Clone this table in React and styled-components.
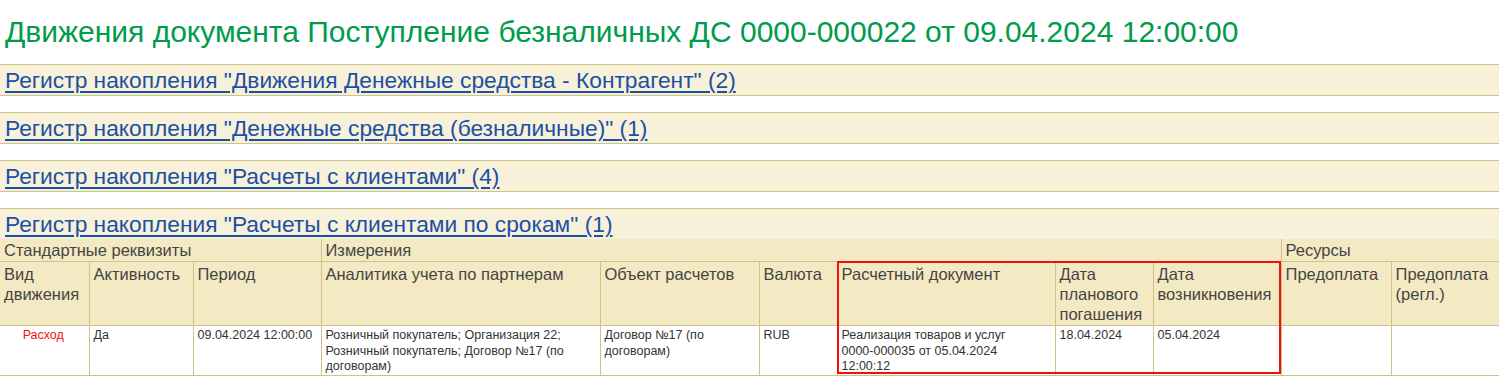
import React from 'react';
import styled, { createGlobalStyle } from 'styled-components';

const GlobalStyle = createGlobalStyle`
  html, body {
    margin: 0;
    padding: 0;
    background: #ffffff;
    font-family: "Liberation Sans", Arial, sans-serif;
  }
`;

const Page = styled.div`
  width: 1499px;
  height: 376px;
  overflow: hidden;
`;

const Title = styled.h1`
  margin: 0;
  padding: 15px 0 0 5px;
  height: 64px;
  box-sizing: border-box;
  font-size: 30px;
  font-weight: normal;
  line-height: 34px;
  color: #009b4b;
  white-space: nowrap;
`;

const Section = styled.div`
  margin-bottom: ${({ last }) => (last ? '0' : '16px')};
`;

const Band = styled.div`
  height: 32px;
  box-sizing: border-box;
  background: #f7f1da;
  border-top: 1px solid #d0c286;
  border-bottom: 1px solid #d0c286;
  padding: 1px 0 0 5px;
  display: flex;
  align-items: center;
`;

const RegisterLink = styled.a`
  font-size: 22.75px;
  color: #1c4fa6;
  text-decoration: underline;
  text-decoration-thickness: 2px;
  text-underline-offset: 3px;
  white-space: nowrap;
  cursor: pointer;
`;

const TableWrap = styled.div`
  position: relative;
`;

const Grid = styled.table`
  border-collapse: collapse;
  table-layout: fixed;
  width: 1500px;
  margin-top: -1px;
`;

const GroupCell = styled.th`
  background: #f3e9c3;
  border: 1px solid #d0c286;
  border-top: none;
  height: 22px;
  padding: 0 4px;
  font-size: 16.5px;
  font-weight: normal;
  color: #454545;
  text-align: left;
  white-space: nowrap;
  &:first-child { border-left: none; }
`;

const HeadCell = styled.th`
  background: #f3e9c3;
  border: 1px solid #d0c286;
  height: 61px;
  padding: 2px 4px 0 4px;
  font-size: 16.5px;
  line-height: 20px;
  font-weight: normal;
  color: #454545;
  text-align: left;
  vertical-align: top;
  &:first-child { border-left: none; }
`;

const Cell = styled.td`
  border: 1px solid #d0c286;
  height: 46px;
  padding: 2px ${({ $padRight }) => $padRight || 6}px 0 4px;
  font-size: 12.5px;
  line-height: 15.5px;
  color: ${({ $red }) => ($red ? '#ee1111' : '#333333')};
  text-align: ${({ $center }) => ($center ? 'center' : 'left')};
  vertical-align: top;
  &:first-child { border-left: none; }
`;

const Highlight = styled.div`
  position: absolute;
  left: 837px;
  top: 22px;
  width: 444px;
  height: 113px;
  box-sizing: border-box;
  border: 2px solid #ee1111;
  pointer-events: none;
`;

const registers = [
  'Регистр накопления "Движения Денежные средства - Контрагент" (2)',
  'Регистр накопления "Денежные средства (безналичные)" (1)',
  'Регистр накопления "Расчеты с клиентами" (4)',
  'Регистр накопления "Расчеты с клиентами по срокам" (1)',
];

const columns = [
  { title: 'Вид движения', width: 89 },
  { title: 'Активность', width: 104 },
  { title: 'Период', width: 128 },
  { title: 'Аналитика учета по партнерам', width: 279 },
  { title: 'Объект расчетов', width: 159 },
  { title: 'Валюта', width: 78 },
  { title: 'Расчетный документ', width: 218 },
  { title: 'Дата планового погашения', width: 98 },
  { title: 'Дата возникновения', width: 128 },
  { title: 'Предоплата', width: 110 },
  { title: 'Предоплата (регл.)', width: 109 },
];

// value + optional right padding (keeps the document number on one line)
const row = [
  { v: 'Да' },
  { v: '09.04.2024 12:00:00' },
  { v: 'Розничный покупатель; Организация 22; Розничный покупатель; Договор №17 (по договорам)' },
  { v: 'Договор №17 (по договорам)' },
  { v: 'RUB' },
  { v: 'Реализация товаров и услуг 0000-000035 от 05.04.2024 12:00:12', pad: 20 },
  { v: '18.04.2024' },
  { v: '05.04.2024' },
  { v: '' },
  { v: '' },
];

const App = () => {
  return (
    <Page>
      <GlobalStyle />
      <Title>Движения документа Поступление безналичных ДС 0000-000022 от 09.04.2024 12:00:00</Title>
      {registers.map((name, i) => (
        <Section key={i} last={i === registers.length - 1}>
          <Band>
            <RegisterLink>{name}</RegisterLink>
          </Band>
        </Section>
      ))}
      <TableWrap>
        <Grid>
          <colgroup>
            {columns.map((c, i) => (
              <col key={i} style={{ width: c.width }} />
            ))}
          </colgroup>
          <thead>
            <tr>
              <GroupCell colSpan={3}>Стандартные реквизиты</GroupCell>
              <GroupCell colSpan={6}>Измерения</GroupCell>
              <GroupCell colSpan={2}>Ресурсы</GroupCell>
            </tr>
            <tr>
              {columns.map((c, i) => (
                <HeadCell key={i}>{c.title}</HeadCell>
              ))}
            </tr>
          </thead>
          <tbody>
            <tr>
              <Cell $red $center>Расход</Cell>
              {row.map((c, i) => (
                <Cell key={i} $padRight={c.pad}>{c.v}</Cell>
              ))}
            </tr>
          </tbody>
        </Grid>
        <Highlight />
      </TableWrap>
    </Page>
  );
};

export default App;
